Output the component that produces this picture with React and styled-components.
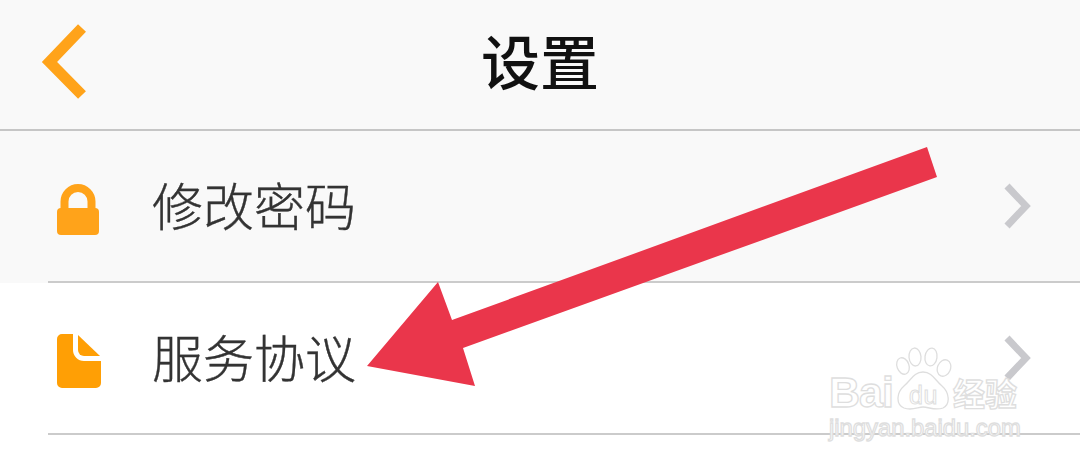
import React from "react";
import styled, { createGlobalStyle } from "styled-components";

const Global = createGlobalStyle`
  html, body { margin: 0; padding: 0; background: #fff; }
  body { font-family: "Noto Sans CJK SC", "Noto Sans", sans-serif; }
`;
const Page = styled.div`
  position: relative;
  width: 1080px;
  height: 464px;
  overflow: hidden;
  background: #fff;
`;
const Header = styled.header`
  height: 131px;
  box-sizing: border-box;
  display: grid;
  grid-template-columns: 1fr auto 1fr;
  align-items: center;
  padding-bottom: 10px;
  background: #f9f9f9;
  border-bottom: 2px solid #c6c6c6;
`;
const BackIcon = styled.svg`
  margin-left: 38px;
  margin-top: 6px;
`;
const Title = styled.h1`
  margin: 0;
  font-size: 59px;
  line-height: 1;
  font-weight: 500;
  color: #111;
`;
const Row = styled.div`
  height: 152px;
  padding-left: 48px;
  box-sizing: border-box;
  background: ${(p) => p.$bg};
`;
const RowInner = styled.div`
  height: 100%;
  box-sizing: border-box;
  display: flex;
  align-items: center;
  border-bottom: 2px solid #cbcbcb;
`;
const IconSlot = styled.div`
  width: 104px;
  display: flex;
  padding: 6px 0 0 9px;
  box-sizing: border-box;
`;
const Label = styled.span`
  flex: 1;
  font-size: 51px;
  line-height: 1;
  font-weight: 300;
  color: #333;
  -webkit-text-stroke: 0.35px #333;
  padding-bottom: 4px;
`;
const Chevron = styled.svg`
  margin-right: 47px;
`;
const Arrow = styled.svg`
  position: absolute;
  left: 0;
  top: 0;
`;
const Watermark = styled.div`
  position: absolute;
  left: 829px;
  top: 347px;
  width: 192px;
  display: flex;
  flex-direction: column;
  gap: 5px;
  color: #fff;
  -webkit-text-stroke: 1.3px #dedede;
`;
const Brand = styled.div`
  display: flex;
  align-items: flex-end;
  height: 63px;
`;
const Bai = styled.span`
  font: 700 43px/36px "Liberation Sans", sans-serif;
  letter-spacing: -1px;
  width: 66px;
`;
const PawBox = styled.div`
  position: relative;
  width: 57px;
  height: 63px;
  display: flex;
  align-items: flex-end;
  justify-content: center;
  flex: none;
`;
const Du = styled.span`
  position: relative;
  font: 400 25px/26px "Liberation Sans", sans-serif;
  letter-spacing: 0.5px;
  -webkit-text-stroke-width: 1px;
  margin-bottom: 2px;
`;
const Paw = styled.svg`
  position: absolute;
  left: 0;
  top: 0;
`;
const Jing = styled.span`
  font: 700 32px/36px "Noto Sans CJK SC", sans-serif;
  white-space: nowrap;
  margin-left: 1px;
`;
const Url = styled.span`
  font: 400 23.8px/26px "Liberation Sans", sans-serif;
  white-space: nowrap;
`;

const ChevronIcon = () => (
  <Chevron width="30" height="46" viewBox="0 0 30 46">
    <polyline points="4,3 23,23 4,43" fill="none" stroke="#c9c9cd" strokeWidth="7" />
  </Chevron>
);

export default function App() {
  return (
    <Page>
      <Global />
      <Header>
        <BackIcon width="52" height="82" viewBox="0 0 52 82">
          <polyline points="44,6 11.5,40 44,73" fill="none" stroke="#ffa31a" strokeWidth="11" />
        </BackIcon>
        <Title>设置</Title>
      </Header>
      <Row $bg="#f9f9f9">
        <RowInner>
          <IconSlot>
            <svg width="42" height="51" viewBox="0 0 42 51">
              <path d="M7.5 26V17.5a13.5 13.5 0 0 1 27 0V26" fill="none" stroke="#ffa31a" strokeWidth="8" />
              <rect x="0" y="24" width="42" height="27" rx="4" fill="#ffa31a" />
            </svg>
          </IconSlot>
          <Label>修改密码</Label>
          <ChevronIcon />
        </RowInner>
      </Row>
      <Row $bg="#fff">
        <RowInner>
          <IconSlot>
            <svg width="44" height="54" viewBox="0 0 44 54">
              <path d="M5 0H16V16a11 11 0 0 0 11 11H44V49a5 5 0 0 1-5 5H5a5 5 0 0 1-5-5V5a5 5 0 0 1 5-5Z" fill="#ff9f05" />
              <path d="M21 1 43 22H27a6 6 0 0 1-6-6Z" fill="#ff9f05" />
            </svg>
          </IconSlot>
          <Label>服务协议</Label>
          <ChevronIcon />
        </RowInner>
      </Row>
      <Watermark>
        <Brand>
          <Bai>Bai</Bai>
          <PawBox>
            <Paw width="57" height="63" viewBox="0 0 57 63">
              <g fill="#fff" stroke="#dedede" strokeWidth="1.3">
                <ellipse cx="8" cy="19" rx="6" ry="8.5" transform="rotate(-20 8 19)" />
                <ellipse cx="20" cy="10" rx="6" ry="9" transform="rotate(-5 20 10)" />
                <ellipse cx="36" cy="10" rx="6" ry="9" transform="rotate(8 36 10)" />
                <ellipse cx="49" cy="21" rx="6.5" ry="8.5" transform="rotate(22 49 21)" />
                <path d="M28 25C19 25 16 33 9 39C2 45 0 57 9 61C17 64 23 60 28 60C34 60 40 64 48 61C56 57 54 45 47 39C40 33 37 25 28 25Z" />
              </g>
            </Paw>
            <Du>du</Du>
          </PawBox>
          <Jing>经验</Jing>
        </Brand>
        <Url>jingyan.baidu.com</Url>
      </Watermark>
      <Arrow width="1080" height="464" viewBox="0 0 1080 464">
        <polygon points="927,147 937,177 463,348 475,386 367,366 438,282 452,320" fill="#ea364b" />
      </Arrow>
    </Page>
  );
}
